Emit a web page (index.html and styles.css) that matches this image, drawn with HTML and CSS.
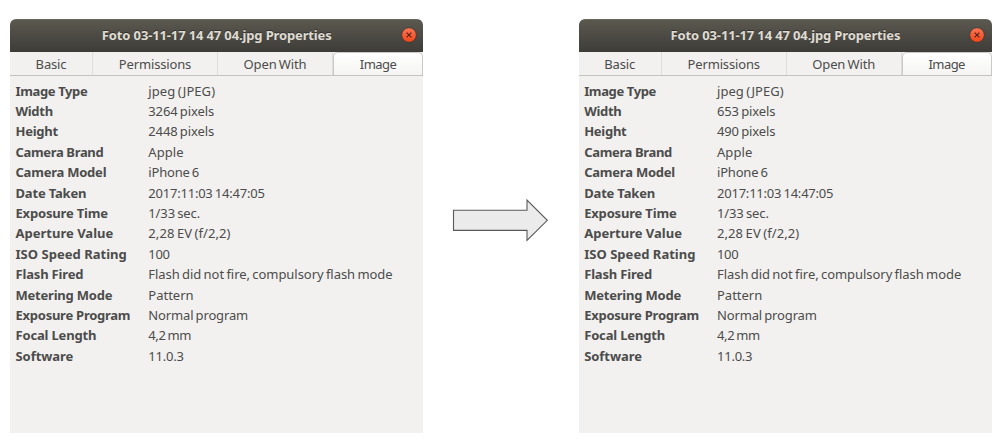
FILE: index.html
```html
<!DOCTYPE html>
<html lang="en">
<head>
<meta charset="utf-8">
<title>Image properties</title>
<link rel="stylesheet" href="styles.css">
</head>
<body>
<main class="stage">
  <section class="window" data-width="3264 pixels" data-height="2448 pixels" data-span="66"></section>
  <svg class="arrow" viewBox="0 0 97 44" aria-hidden="true">
    <path d="M1.5 12.2H75V2L95.3 22.3 75 42.5V32.4H1.5Z"/>
  </svg>
  <section class="window" data-width="653 pixels" data-height="490 pixels" data-span="58.5"></section>
</main>
<template id="window-template">
  <header class="titlebar">
    <h1 class="title"><span data-fit="230">Foto 03-11-17 14 47 04.jpg Properties</span></h1>
    <svg class="close" viewBox="0 0 16 16" aria-label="Close">
      <defs><linearGradient id="red" x2="0" y2="1"><stop stop-color="#fb7654"/><stop offset="1" stop-color="#f34519"/></linearGradient></defs>
      <circle cx="8" cy="8" r="7.3" fill="url(#red)" stroke="#35332f" stroke-width=".7"/>
      <path d="M5.6 5.6l4.8 4.8M10.4 5.6l-4.8 4.8" stroke="#51231a" stroke-width="1.15"/>
    </svg>
  </header>
  <nav class="tabs">
    <span class="tab"><span data-fit="31">Basic</span></span>
    <span class="tab"><span data-fit="72.5">Permissions</span></span>
    <span class="tab"><span data-fit="63">Open With</span></span>
    <span class="tab active"><span data-fit="36.5">Image</span></span>
  </nav>
  <dl class="properties"></dl>
</template>
<script src="app.js"></script>
</body>
</html>
```
FILE: styles.css
```css
* { box-sizing: border-box; }
body {
  margin: 0;
  background: #fff;
  font-family: "Noto Sans", "Open Sans", sans-serif;
  font-size: 13px;
  color: #4c4c4c;
}
.stage {
  display: flex;
  width: 1003px;
  height: 442px;
  padding: 18.5px 0 9px 10px;
  overflow: hidden;
}
.window {
  flex: none;
  width: 413px;
  height: 414.5px;
  background: #f2f1ef;
  border-radius: 6px 6px 0 0;
  overflow: hidden;
}
.arrow {
  flex: none;
  width: 97px;
  height: 44px;
  margin: 179px 30px 0 28.7px;
  fill: #ebebeb;
  stroke: #595959;
  stroke-width: 1.1;
}
.titlebar {
  display: flex;
  align-items: center;
  height: 33.5px;
  padding: 0 6.5px 2px 0;
  background: linear-gradient(#5b584f, #3d3c38);
  border-top: 1px solid #69665d;
}
.title {
  flex: 1;
  margin: 0 0 0 23px;
  text-align: center;
  font-size: 13px;
  line-height: 20px;
  color: #dfdbd2;
  text-shadow: 0 -1px #33322e;
}
.close { width: 16px; height: 16px; margin-top: 1px; }
.tabs {
  display: grid;
  grid-template-columns: 83px 125px 115px 90px;
  height: 24px;
  border-bottom: 1px solid #c5c3c0;
}
.tab {
  display: flex;
  justify-content: center;
  align-items: center;
  padding-top: 1px;
  border-right: 1px solid #dfdddb;
  word-spacing: -1px;
}
.tab.active {
  background: linear-gradient(#fff, #f5f4f3);
  border: 1px solid #cbc9c6;
  border-bottom: 0;
  border-radius: 5px 5px 0 0;
  padding-top: 0;
}
.properties {
  display: grid;
  grid-template-columns: 132.8px 1fr;
  grid-auto-rows: 20.42px;
  margin: 4.5px 0 0 5.5px;
  line-height: 20.42px;
}
.properties dt { font-weight: 700; }
.properties dd { margin: 0; word-spacing: -1px; }
[data-fit] { white-space: nowrap; }
```
FILE: app.js
```javascript
const template = document.getElementById("window-template");

// Label, label width, value, value width
const rowsFor = ({ width, height, span }) => [
  ["Image Type", 72, "jpeg (JPEG)", 67],
  ["Width", 37.5, width, span],
  ["Height", 42.5, height, span],
  ["Camera Brand", 88, "Apple", 35.5],
  ["Camera Model", 91, "iPhone 6", 51],
  ["Date Taken", 71, "2017:11:03 14:47:05", 116.5],
  ["Exposure Time", 92.5, "1/33 sec.", 52],
  ["Aperture Value", 98, "2,28 EV (f/2,2)", 82.5],
  ["ISO Speed Rating", 111.5, "100", 21.5],
  ["Flash Fired", 68, "Flash did not fire, compulsory flash mode", 244.5],
  ["Metering Mode", 97, "Pattern", 45.5],
  ["Exposure Program", 115, "Normal program", 100],
  ["Focal Length", 81, "4,2 mm", 43],
  ["Software", 58, "11.0.3", 35.5],
];

function cell(tag, text, width) {
  const el = document.createElement(tag);
  const span = document.createElement("span");
  span.textContent = text;
  span.dataset.fit = width;
  el.append(span);
  return el;
}

document.querySelectorAll(".window").forEach((win) => {
  win.append(template.content.cloneNode(true));
  const list = win.querySelector(".properties");
  for (const [label, lw, value, vw] of rowsFor(win.dataset)) {
    list.append(cell("dt", label, lw), cell("dd", value, vw));
  }
});

// Track each run of text to its set width
document.querySelectorAll("[data-fit]").forEach((el) => {
  const slack = Number(el.dataset.fit) - 0.2 - el.getBoundingClientRect().width;
  el.style.letterSpacing = `${slack / el.textContent.length}px`;
});
```
